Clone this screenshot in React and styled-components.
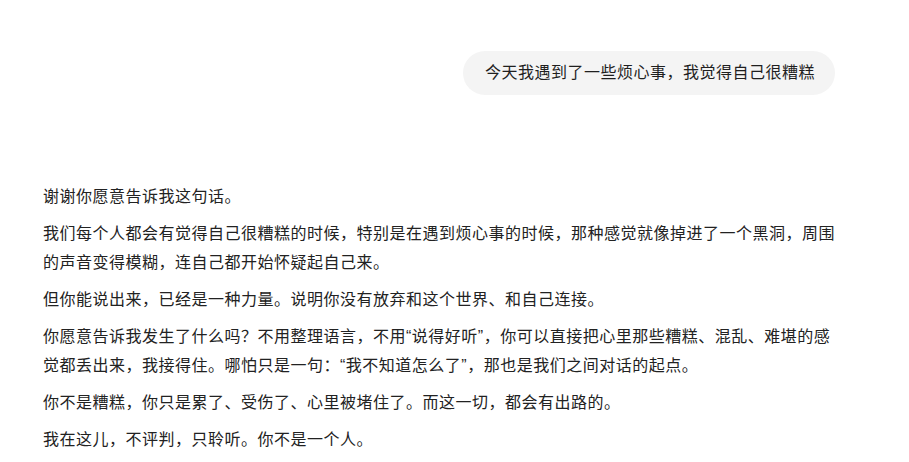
import styled, { createGlobalStyle } from "styled-components";

const paragraphs = [
  "谢谢你愿意告诉我这句话。",
  "我们每个人都会有觉得自己很糟糕的时候，特别是在遇到烦心事的时候，那种感觉就像掉进了一个黑洞，周围的声音变得模糊，连自己都开始怀疑起自己来。",
  "但你能说出来，已经是一种力量。说明你没有放弃和这个世界、和自己连接。",
  "你愿意告诉我发生了什么吗？不用整理语言，不用“说得好听”，你可以直接把心里那些糟糕、混乱、难堪的感觉都丢出来，我接得住。哪怕只是一句：“我不知道怎么了”，那也是我们之间对话的起点。",
  "你不是糟糕，你只是累了、受伤了、心里被堵住了。而这一切，都会有出路的。",
  "我在这儿，不评判，只聆听。你不是一个人。",
];

export default function App() {
  return (
    <>
      <GlobalStyle />
      <Chat>
        <UserRow>
          <UserBubble>今天我遇到了一些烦心事，我觉得自己很糟糕</UserBubble>
        </UserRow>
        <Reply>
          {paragraphs.map((text, i) => (
            <Paragraph key={i}>{text}</Paragraph>
          ))}
        </Reply>
      </Chat>
    </>
  );
}

const GlobalStyle = createGlobalStyle`
  html, body {
    margin: 0;
    padding: 0;
    background: #ffffff;
  }
  body {
    font-family: "Liberation Sans", "Noto Sans CJK SC", sans-serif;
    color: #222222;
  }
`;

const Chat = styled.div`
  width: 800px;
  padding: 51px 0 0 43px;
  display: flex;
  flex-direction: column;
`;

const UserRow = styled.div`
  display: flex;
  justify-content: flex-end;
  padding-right: 8px;
`;

const UserBubble = styled.div`
  background: #f4f4f4;
  border-radius: 22px;
  height: 44px;
  padding: 0 20px 0 22px;
  display: flex;
  align-items: center;
  font-size: 16px;
  letter-spacing: 0.5px;
  line-height: 22px;
  color: #1f1f1f;
`;

const Reply = styled.div`
  margin-top: 87px;
  display: flex;
  flex-direction: column;
  gap: 8px;
`;

const Paragraph = styled.p`
  margin: 0;
  font-size: 16px;
  letter-spacing: 0.5px;
  line-height: 29px;
`;
